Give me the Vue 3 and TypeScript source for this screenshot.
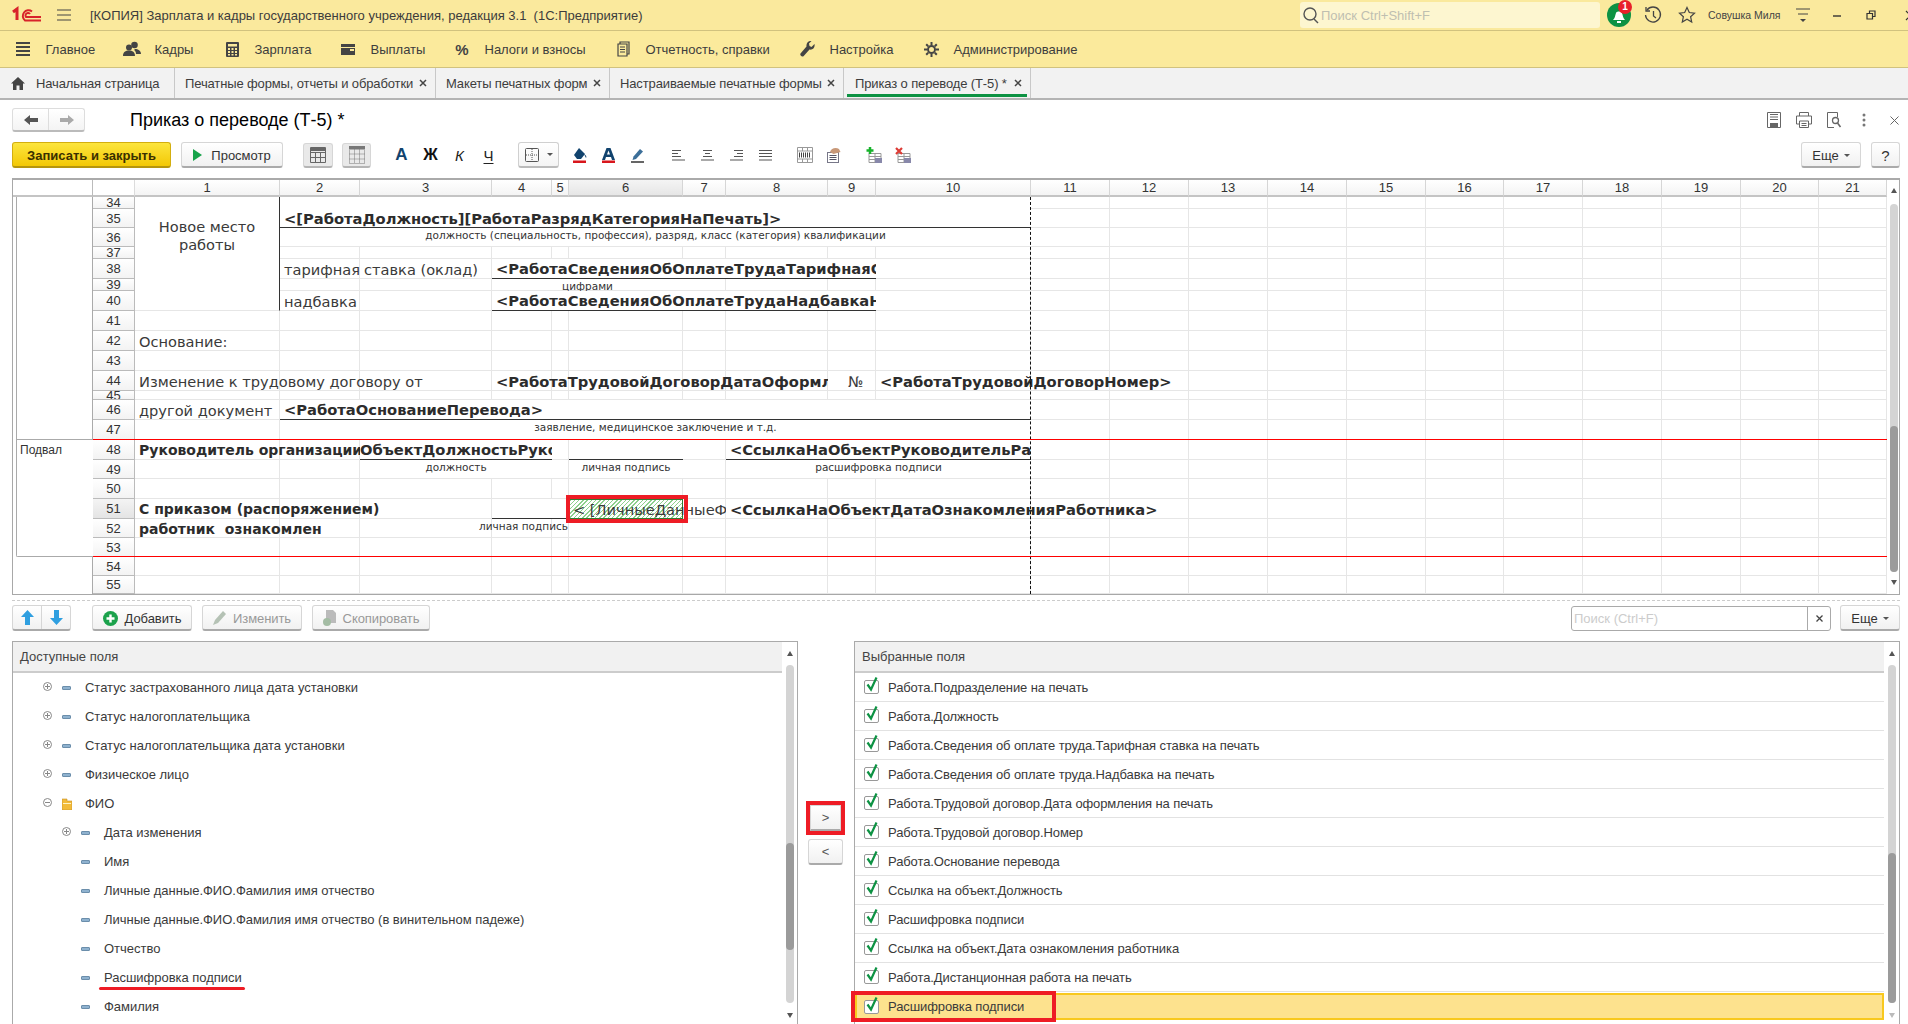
<script setup lang="ts">
interface Item { r1: number; r2: number; c1: number; c2: number; t?: string; cls: string }

const menu = [
  { t: 'Главное', w: 109, i: 'burger' },
  { t: 'Кадры', w: 100, i: 'people' },
  { t: 'Зарплата', w: 116, i: 'calc' },
  { t: 'Выплаты', w: 114, i: 'wallet' },
  { t: 'Налоги и взносы', w: 161, i: 'pct' },
  { t: 'Отчетность, справки', w: 184, i: 'report' },
  { t: 'Настройка', w: 124, i: 'wrench' },
  { t: 'Администрирование', w: 160, i: 'gear' },
]
const tabs = [
  { t: 'Начальная страница', w: 175, home: true },
  { t: 'Печатные формы, отчеты и обработки', w: 261 },
  { t: 'Макеты печатных форм', w: 174 },
  { t: 'Настраиваемые печатные формы', w: 234 },
  { t: 'Приказ о переводе (Т-5) *', w: 187, active: true },
]
const colW = [145, 80, 132, 60, 17, 114, 43, 102, 48, 155, 79, 79, 79, 79, 79, 78, 79, 79, 79, 78, 68]
const rowH = [12, 19, 19, 12, 20, 12, 20, 20, 20, 20, 20, 9, 20, 20, 20, 19, 20, 20, 19, 19, 19, 18]
const rows = rowH.map((h, i) => ({ n: 34 + i, h, line: i + 2 }))
const cols = colW.map((_, i) => i + 1)

const gridCols = '80px 42px ' + colW.map(w => w + 'px').join(' ')
const gridRows = '17px ' + rowH.map(h => h + 'px').join(' ')

const rowLine = (n: number) => n - 34 + 2
const colLine = (n: number) => n + 2
const items: Item[] = [
  { r1: 34, r2: 40, c1: 1, c2: 1, t: 'Новое место работы', cls: 'merged newplace' },
  { r1: 34, r2: 35, c1: 2, c2: 10, t: '<[РаботаДолжность][РаботаРазрядКатегорияНаПечать]>', cls: 'merged bold field under endal' },
  { r1: 36, r2: 36, c1: 2, c2: 10, t: 'должность (специальность, профессия), разряд, класс (категория) квалификации', cls: 'merged small' },
  { r1: 38, r2: 38, c1: 2, c2: 2, t: 'тарифная', cls: 'text' },
  { r1: 38, r2: 38, c1: 3, c2: 3, t: 'ставка (оклад)', cls: 'text' },
  { r1: 38, r2: 38, c1: 4, c2: 9, t: '<РаботаСведенияОбОплатеТрудаТарифнаяСтавкаНаПечать>', cls: 'merged bold field under' },
  { r1: 39, r2: 39, c1: 4, c2: 6, t: 'цифрами', cls: 'merged small' },
  { r1: 40, r2: 40, c1: 2, c2: 2, t: 'надбавка', cls: 'text' },
  { r1: 40, r2: 40, c1: 4, c2: 9, t: '<РаботаСведенияОбОплатеТрудаНадбавкаНаПечать>', cls: 'merged bold field under' },
  { r1: 42, r2: 42, c1: 1, c2: 1, t: 'Основание:', cls: 'text' },
  { r1: 44, r2: 44, c1: 1, c2: 3, t: 'Изменение к трудовому договору от', cls: 'text' },
  { r1: 44, r2: 44, c1: 4, c2: 8, t: '<РаботаТрудовойДоговорДатаОформленияНаПечать>', cls: 'bold field clip' },
  { r1: 44, r2: 44, c1: 9, c2: 9, t: '№', cls: 'text center' },
  { r1: 44, r2: 44, c1: 10, c2: 12, t: '<РаботаТрудовойДоговорНомер>', cls: 'bold field clip' },
  { r1: 46, r2: 46, c1: 1, c2: 1, t: 'другой документ', cls: 'text' },
  { r1: 46, r2: 46, c1: 2, c2: 10, t: '<РаботаОснованиеПеревода>', cls: 'merged bold field under' },
  { r1: 47, r2: 47, c1: 2, c2: 10, t: 'заявление, медицинское заключение и т.д.', cls: 'merged small' },
  { r1: 48, r2: 48, c1: 1, c2: 2, t: 'Руководитель организации', cls: 'bold clip' },
  { r1: 48, r2: 48, c1: 3, c2: 4, t: 'ОбъектДолжностьРуководителя', cls: 'merged bold field under nopad' },
  { r1: 48, r2: 48, c1: 6, c2: 6, cls: 'merged under' },
  { r1: 48, r2: 48, c1: 8, c2: 10, t: '<СсылкаНаОбъектРуководительРасшифровка>', cls: 'merged bold field under' },
  { r1: 49, r2: 49, c1: 3, c2: 4, t: 'должность', cls: 'merged small' },
  { r1: 49, r2: 49, c1: 6, c2: 6, t: 'личная подпись', cls: 'merged small' },
  { r1: 49, r2: 49, c1: 8, c2: 10, t: 'расшифровка подписи', cls: 'merged small' },
  { r1: 51, r2: 51, c1: 1, c2: 3, t: 'С приказом (распоряжением)', cls: 'bold clip' },
  { r1: 51, r2: 51, c1: 4, c2: 5, cls: 'merged under' },
  { r1: 51, r2: 51, c1: 6, c2: 6, cls: 'hatch' },
  { r1: 51, r2: 51, c1: 6, c2: 7, t: '< [ЛичныеДанныеФИОРасшифровкаПодписи]>', cls: 'text clip' },
  { r1: 51, r2: 51, c1: 8, c2: 13, t: '<СсылкаНаОбъектДатаОзнакомленияРаботника>', cls: 'bold field clip' },
  { r1: 52, r2: 52, c1: 1, c2: 3, t: 'работник  ознакомлен', cls: 'bold clip pre' },
  { r1: 52, r2: 52, c1: 4, c2: 5, t: 'личная подпись', cls: 'merged small shifted' },
  { r1: 51, r2: 51, c1: 6, c2: 6, cls: 'redbox' },
]
const itemStyle = (it: Item) => ({
  gridArea: `${rowLine(it.r1)} / ${colLine(it.c1)} / ${rowLine(it.r2) + 1} / ${colLine(it.c2) + 1}`,
})
const cellStyle = (line: number, col: number) => ({ gridRow: line, gridColumn: col })

const aligns = ['l', 'c', 'r', 'j']

const tree = [
  { lvl: 0, t: 'Статус застрахованного лица дата установки', tog: '+' },
  { lvl: 0, t: 'Статус налогоплательщика', tog: '+' },
  { lvl: 0, t: 'Статус налогоплательщика дата установки', tog: '+' },
  { lvl: 0, t: 'Физическое лицо', tog: '+' },
  { lvl: 0, t: 'ФИО', tog: '-', folder: true },
  { lvl: 1, t: 'Дата изменения', tog: '+' },
  { lvl: 1, t: 'Имя', tog: '' },
  { lvl: 1, t: 'Личные данные.ФИО.Фамилия имя отчество', tog: '' },
  { lvl: 1, t: 'Личные данные.ФИО.Фамилия имя отчество (в винительном падеже)', tog: '' },
  { lvl: 1, t: 'Отчество', tog: '' },
  { lvl: 1, t: 'Расшифровка подписи', tog: '', mark: true },
  { lvl: 1, t: 'Фамилия', tog: '' },
]
const picked = [
  'Работа.Подразделение на печать',
  'Работа.Должность',
  'Работа.Сведения об оплате труда.Тарифная ставка на печать',
  'Работа.Сведения об оплате труда.Надбавка на печать',
  'Работа.Трудовой договор.Дата оформления на печать',
  'Работа.Трудовой договор.Номер',
  'Работа.Основание перевода',
  'Ссылка на объект.Должность',
  'Расшифровка подписи',
  'Ссылка на объект.Дата ознакомления работника',
  'Работа.Дистанционная работа на печать',
  'Расшифровка подписи',
]
</script>

<template>
  <div class="app">
    <header class="titlebar">
      <svg class="logo" width="30" height="18" viewBox="0 0 30 18" fill="none" stroke="#d8232a">
        <path d="M1 6 L5 3 V14" stroke-width="3" />
        <path d="M20 5.500 A5.500 5.500 0 1 0 13 14.500 H29" stroke-width="2" />
        <path d="M18 8 A2.500 2.500 0 1 0 14 11 H29" stroke-width="2" />
      </svg>
      <svg class="burger" width="16" height="14" viewBox="0 0 16 14" stroke="#444"><path d="M1 2H15M1 7H15M1 12H15" stroke-width="1" /></svg>
      <span class="apptitle">[КОПИЯ] Зарплата и кадры государственного учреждения, редакция 3.1&nbsp; (1С:Предприятие)</span>
      <div class="globalsearch">
        <svg width="17" height="18" viewBox="0 0 17 18" fill="none" stroke="#555" stroke-width="1.4"><circle cx="8" cy="8" r="6" /><path d="M12 13l4 4" /></svg>
        <span>Поиск Ctrl+Shift+F</span>
      </div>
      <div class="bell">
        <svg width="26" height="26" viewBox="0 0 26 26"><circle cx="13" cy="13" r="12" fill="#0d9243" /><path d="M7 18c2-2 2-4 3-7 .6-2 5-2 6 0 1 3 1 5 3 7z" fill="#fff" /><rect x="11" y="19" width="4" height="2" fill="#fff" /></svg>
        <span class="badge">1</span>
      </div>
      <svg class="tic hist" width="20" height="20" viewBox="0 0 20 20" fill="none" stroke="#444" stroke-width="1.3"><path d="M4 5a7.500 7.500 0 1 1-1.500 5" /><path d="M3 2v4h4" /><path d="M10.500 6v5l2.500 2" /></svg>
      <svg class="tic star" width="18" height="18" viewBox="0 0 18 18" fill="none" stroke="#444" stroke-width="1.2"><path d="M9 1.500l2.300 5 5.200.6-3.900 3.600 1.100 5.300L9 13.300 4.300 16l1.100-5.300L1.500 7.100l5.200-.6z" /></svg>
      <span class="uname">Совушка Миля</span>
      <svg class="tic drop" width="16" height="16" viewBox="0 0 16 16" stroke="#444"><path d="M1 2H15M3 7H13" /><path d="M5 12h6l-3 3z" fill="#444" stroke="none" /></svg>
      <svg class="tic min" width="10" height="4" viewBox="0 0 10 4" stroke="#333" stroke-width="1.4"><path d="M1 3H9" /></svg>
      <svg class="tic max" width="10" height="10" viewBox="0 0 10 10" fill="none" stroke="#333" stroke-width="1.2"><path d="M1 3.500h5.500V9H1zM3.500 3.500V1H9v5.500H6.500" /></svg>
      <svg class="tic cls" width="11" height="11" viewBox="0 0 11 11" stroke="#333" stroke-width="1.2"><path d="M1 1l9 9M10 1l-9 9" /></svg>
    </header>

    <nav class="menubar">
      <div v-for="m in menu" :key="m.t" class="mitem" :style="{ width: m.w + 'px' }">
        <span class="micon">
          <svg v-if="m.i === 'burger'" width="16" height="16" viewBox="0 0 16 16" fill="#444"><path d="M1 1h14v2H1zM1 5h14v2H1zM1 9h14v2H1zM1 13h14v2H1z" /></svg>
          <svg v-else-if="m.i === 'people'" width="18" height="16" viewBox="0 0 18 16" fill="#444"><circle cx="11.500" cy="4" r="3.300" /><circle cx="6" cy="6.500" r="3" /><path d="M0 15c0-4 2.500-5.500 6-5.500s6 1.500 6 5.500zM12 8c3 0 6 1.500 6 5h-5c0-2-1-3.500-2-4z" /></svg>
          <svg v-else-if="m.i === 'calc'" width="13" height="15" viewBox="0 0 13 15"><rect width="13" height="15" rx="1" fill="#444" /><rect x="2" y="2" width="9" height="2.500" fill="#fbea9c" /><path d="M2 6h2v2H2zM5.500 6h2v2h-2zM9 6h2v2H9zM2 9h2v2H2zM5.500 9h2v2h-2zM9 9h2v2H9zM2 12h2v1.500H2zM5.500 12h2v1.500h-2zM9 12h2v1.500H9z" fill="#fbea9c" /></svg>
          <svg v-else-if="m.i === 'wallet'" width="14" height="13" viewBox="0 0 14 13" fill="#444"><path d="M0 1h14v3H0zM0 5h14v7H0z" /><rect x="9" y="6" width="4" height="2" fill="#fbea9c" /></svg>
          <span v-else-if="m.i === 'pct'" class="pct">%</span>
          <svg v-else-if="m.i === 'report'" width="13" height="16" viewBox="0 0 13 16" fill="none" stroke="#444" stroke-width="1.2"><path d="M1 3h9v12H1zM3 3V1h9v12h-2M3 6h5M3 8.500h5M3 11h5" /></svg>
          <svg v-else-if="m.i === 'wrench'" width="15" height="16" viewBox="0 0 15 16" fill="#444"><path d="M14.500 3l-3 3-2-1-.5-2.500L11.500 0C8.500-.5 6 2 6.500 5.500L.5 12.500c-1 1.500 1.200 4 3 2.700l6-6.700c3 .8 5.800-2 5-5.500z" /></svg>
          <svg v-else width="15" height="15" viewBox="0 0 15 15" fill="none" stroke="#444" stroke-width="2"><circle cx="7.500" cy="7.500" r="3.500" /><path d="M7.500 0v3M7.500 12v3M0 7.500h3M12 7.500h3M2.200 2.200l2 2M10.800 10.800l2 2M12.800 2.200l-2 2M4.200 10.800l-2 2" /></svg>
        </span>
        <span>{{ m.t }}</span>
      </div>
    </nav>

    <div class="tabs">
      <div v-for="tab in tabs" :key="tab.t" class="tab" :class="{ active: tab.active, first: tab.home }" :style="{ width: tab.w + 'px' }">
        <svg v-if="tab.home" class="home" width="14" height="13" viewBox="0 0 14 13" fill="#444"><path d="M7 0l7 6.500h-2V13H8.500V8.500h-3V13H2V6.500H0z" /></svg>
        <span class="tabtext">{{ tab.t }}</span>
        <svg v-if="!tab.home" class="tabx" width="8" height="8" viewBox="0 0 8 8" stroke="#444" stroke-width="1.5"><path d="M1 1l6 6M7 1L1 7" /></svg>
      </div>
    </div>

    <main class="form">
      <div class="formhead">
        <div class="navbtns">
          <span class="navb"><svg width="14" height="12" viewBox="0 0 14 12" fill="#555"><path d="M0 6l6-5v3h8v4H6v3z" /></svg></span>
          <span class="navb"><svg width="14" height="12" viewBox="0 0 14 12" fill="#aaa"><path d="M14 6L8 1v3H0v4h8v3z" /></svg></span>
        </div>
        <h1 class="formtitle">Приказ о переводе (Т-5) *</h1>
        <div class="headicons">
          <span class="hi"><svg width="14" height="16" viewBox="0 0 14 16" fill="none" stroke="#666"><path d="M.5.5h13v15H.5zM3 2.500h8M3 5h8M3 7.500h8" /><rect x="3" y="11" width="8" height="4.500" fill="#666" stroke="none" /></svg></span>
          <span class="hi"><svg width="16" height="16" viewBox="0 0 16 16" fill="none" stroke="#666"><path d="M3.500 4V.5h9V4M3.500 12H.5V4h15v8h-3M3.500 9h9v6.500h-9zM5.500 11.500h5M5.500 13.500h5" /></svg></span>
          <span class="hi"><svg width="15" height="16" viewBox="0 0 15 16" fill="none" stroke="#666"><path d="M7 15.500H.5V.5h10V5" /><circle cx="8.500" cy="8.500" r="3" stroke-width="1.300" /><path d="M10.500 11l3 4" stroke-width="1.500" /></svg></span>
          <span class="hi"><svg width="4" height="14" viewBox="0 0 4 14" fill="#777"><circle cx="2" cy="2" r="1.500" /><circle cx="2" cy="7" r="1.500" /><circle cx="2" cy="12" r="1.500" /></svg></span>
          <span class="hi"><svg width="9" height="9" viewBox="0 0 9 9" stroke="#666"><path d="M.5.5l8 8M8.500.5l-8 8" /></svg></span>
        </div>
      </div>

      <div class="toolbar">
        <button class="btn primary">Записать и закрыть</button>
        <button class="btn preview"><svg width="9" height="12" viewBox="0 0 9 12" fill="#17a34a"><path d="M0 0l9 6-9 6z" /></svg>Просмотр</button>
        <span class="tog t1"><svg width="16" height="16" viewBox="0 0 16 16" fill="none" stroke="#666"><path d="M.5.5h15v15H.5zM.5 5.500h15M.5 10.500h15M5.500 5.500v10M10.500 5.500v10" /><path d="M.5 2.500h15" stroke-width="3" /></svg></span>
        <span class="tog t2"><svg width="16" height="18" viewBox="0 0 16 18" fill="none" stroke="#777" stroke-dasharray="1 1"><path d="M.5 3.500h15v14H.5zM.5 8h15M.5 13h15M5.500 3.500v14M10.500 3.500v14" /><path d="M0 1.500h16" stroke-width="3" stroke-dasharray="none" /></svg></span>
        <div class="fmt">
          <span class="ib fa ablue">А</span><span class="ib fa ablack">Ж</span><span class="ib fa aital">К</span><span class="ib fa aund">Ч</span>
        </div>
        <span class="bordersel">
          <svg width="14" height="14" viewBox="0 0 14 14" fill="none" stroke="#555"><rect x=".5" y=".5" width="13" height="13" rx="1" /><path d="M7 1v12M1 7h12" stroke-dasharray="1 1" /></svg>
          <i class="caret"></i>
        </span>
        <div class="iconset s3">
          <span class="ib"><svg width="14" height="15" viewBox="0 0 14 15"><path d="M6 0l6 6-4 5H4L1 7z" fill="#11436e" /><path d="M11 6c2 1 3 3 2 4z" fill="#11436e" /><rect y="12.500" width="13" height="2.500" fill="#d8161c" /></svg></span>
          <span class="ib"><svg width="13" height="15" viewBox="0 0 13 15"><path d="M4.500 0h4L13 12h-3l-1-3H4l-1 3H0zM5 6.500h3L6.500 2.500z" fill="#11436e" fill-rule="evenodd" /><rect y="12.500" width="13" height="2.500" fill="#d8161c" /></svg></span>
          <span class="ib"><svg width="13" height="15" viewBox="0 0 13 15"><path d="M9 1l3 2.500L5 11 1.500 12l1-3.500z" fill="#3c6f99" /><rect y="13" width="13" height="2" fill="#666" /></svg></span>
        </div>
        <div class="iconset s4">
          <span v-for="a in aligns" :key="a" class="ib">
            <svg width="13" height="11" viewBox="0 0 13 11" stroke="#555">
              <path v-if="a === 'l'" d="M0 .5h9M0 3.500h6M0 6.500h9M0 10h13" />
              <path v-else-if="a === 'c'" d="M2 .5h9M4 3.500h5M2 6.500h9M0 10h13" />
              <path v-else-if="a === 'r'" d="M4 .5h9M7 3.500h6M4 6.500h9M0 10h13" />
              <path v-else d="M0 .5h13M0 3.500h13M0 6.500h13M0 10h13" />
            </svg>
          </span>
        </div>
        <div class="iconset s5">
          <span class="ib"><svg width="16" height="16" viewBox="0 0 16 16" fill="none" stroke="#999"><path d="M.5.5h15v15H.5zM.5 4h15M.5 12h15M5.500.5v3.500M10.500.5v3.500M5.500 12v3.500M10.500 12v3.500" /><path d="M2 8h12" stroke="#444" stroke-width="5" stroke-dasharray="1 1" /></svg></span>
          <span class="ib"><svg width="16" height="16" viewBox="0 0 16 16"><rect x="1.500" y="5.500" width="11" height="10" fill="#fff" stroke="#778" /><path d="M3.500 8.500h7M3.500 10.500h7M3.500 12.500h7" stroke="#556" /><path d="M4 5c1-4 6-5 9-3l1.500 3-7 2z" fill="#c89878" /></svg></span>
        </div>
        <div class="iconset s6">
          <span class="ib"><svg width="16" height="16" viewBox="0 0 16 16" fill="none"><path d="M3 6.500h12v9H3zM3 9.500h12M3 12.500h12M9 6.500v9" stroke="#999" /><rect x="9" y="11" width="7" height="5" fill="#88a" /><path d="M4 0v7M.5 3.500h7" stroke="#17b32b" stroke-width="2.500" /></svg></span>
          <span class="ib"><svg width="16" height="16" viewBox="0 0 16 16" fill="none"><path d="M3 6.500h12v9H3zM3 9.500h12M3 12.500h12M9 6.500v9" stroke="#999" /><rect x="9" y="11" width="7" height="5" fill="#88a" /><path d="M1 1l6 6M7 1L1 7" stroke="#dc3b35" stroke-width="2.200" /></svg></span>
        </div>
        <div class="tbright">
          <button class="btn more">Еще<i class="caret"></i></button>
          <button class="btn help">?</button>
        </div>
      </div>

      <section class="sheet">
        <div class="sheetgrid" :style="{ gridTemplateColumns: gridCols, gridTemplateRows: gridRows }">
          <div class="corner corner1"></div>
          <div class="corner"></div>
          <div v-for="c in cols" :key="'h' + c" class="colhead" :class="{ cur: c === 6 }">{{ c }}</div>
          <template v-for="r in rows" :key="r.n">
            <div class="sect" :style="cellStyle(r.line, 1)"></div>
            <div class="rowhead" :class="{ cur: r.n === 51 }" :style="cellStyle(r.line, 2)"><span>{{ r.n }}</span></div>
            <div v-for="c in cols" :key="c" class="cell" :style="cellStyle(r.line, c + 2)"></div>
          </template>
          <div class="sectline"></div>
          <div class="podval">Подвал</div>
          <div class="redline rl1"></div>
          <div class="redline rl2"></div>
          <div v-for="(it, i) in items" :key="i" :class="['gi', it.cls]" :style="itemStyle(it)"><span v-if="it.t">{{ it.t }}</span></div>
          <div class="dashv"></div>
        </div>
        <div class="vscroll sv">
          <i class="tri up"></i>
          <div class="track"><div class="thumb"></div></div>
          <i class="tri down"></i>
        </div>
      </section>

      <div class="dashrow"></div>

      <div class="cmdbar">
        <div class="updown">
          <span><svg width="13" height="15" viewBox="0 0 13 15" fill="#2f9fe0"><path d="M6.500 0L13 7H9v8H4V7H0z" /></svg></span>
          <span><svg width="13" height="15" viewBox="0 0 13 15" fill="#2f9fe0"><path d="M6.500 15L13 8H9V0H4v8H0z" /></svg></span>
        </div>
        <button class="btn cmd add"><svg width="15" height="15" viewBox="0 0 15 15"><circle cx="7.500" cy="7.500" r="7.500" fill="#1ca24c" /><path d="M7.500 3.500v8M3.500 7.500h8" stroke="#fff" stroke-width="2.400" /></svg>Добавить</button>
        <button class="btn cmd off edit"><svg width="13" height="14" viewBox="0 0 13 14" fill="#b5c2b5"><path d="M10 0l3 3-8 9-5 2 2-5z" /></svg>Изменить</button>
        <button class="btn cmd off copy"><svg width="13" height="16" viewBox="0 0 13 16"><path d="M3 0h7l3 3v10H3z" fill="#bbb" /><circle cx="4" cy="12" r="4" fill="#a4bca4" /></svg>Скопировать</button>
        <div class="findbox">
          <span class="ph">Поиск (Ctrl+F)</span>
          <span class="fx"><svg width="7" height="7" viewBox="0 0 7 7" stroke="#444" stroke-width="1.300"><path d="M.5.500l6 6M6.500.500l-6 6" /></svg></span>
        </div>
        <button class="btn more2">Еще<i class="caret"></i></button>
      </div>

      <div class="lists">
        <section class="panel left">
          <div class="pmain">
            <div class="phead">Доступные поля</div>
            <div v-for="n in tree" :key="n.t" class="trow" :class="'lvl' + n.lvl">
              <span class="tog2" :class="{ hid: !n.tog }">
                <svg width="9" height="9" viewBox="0 0 9 9" fill="none" stroke="#888"><circle cx="4.500" cy="4.500" r="4" /><path d="M2 4.500h5" /><path v-if="n.tog === '+'" d="M4.500 2v5" /></svg>
              </span>
              <svg v-if="n.folder" class="kind folder" width="10" height="12" viewBox="0 0 10 12"><path d="M0 1h5v2h5v9H0z" fill="#f2bb3a" stroke="#c8902a" stroke-width=".6" /><path d="M1 5h8v1H1z" fill="#fff3c2" /></svg>
              <span v-else class="kind dash"></span>
              <span class="ttext" :class="{ mark: n.mark }">{{ n.t }}</span>
            </div>
          </div>
          <div class="vscroll pv1">
            <i class="tri up"></i>
            <div class="track"><div class="thumb"></div></div>
            <i class="tri down"></i>
          </div>
        </section>

        <div class="movers">
          <button class="mv first">&gt;</button>
          <button class="mv">&lt;</button>
        </div>

        <section class="panel right">
          <div class="pmain">
            <div class="phead">Выбранные поля</div>
            <div v-for="(p, i) in picked" :key="i" class="prow" :class="{ sel: i === picked.length - 1 }">
              <span class="cb"><svg width="12" height="17" viewBox="0 0 12 17" fill="none" stroke="#0d9243" stroke-width="2.200"><path d="M1.500 8.500l3.500 5L10.500 1.500" /></svg></span>
              <span>{{ p }}</span>
              <i v-if="i === picked.length - 1" class="selred"></i>
            </div>
          </div>
          <div class="vscroll pv2">
            <i class="tri up"></i>
            <div class="track"><div class="thumb"></div></div>
            <i class="tri down lite"></i>
          </div>
        </section>
      </div>
    </main>
  </div>
</template>

<style scoped>
.app { width: 1908px; height: 1024px; overflow: hidden; display: flex; flex-direction: column; background: #fff; font: 13px "Liberation Sans", Arial, sans-serif; color: #333; }
.titlebar { height: 30px; flex: none; display: flex; align-items: center; background: #fae99d; border-bottom: 1px solid #d1c27e; position: relative; box-sizing: content-box; }
.logo { margin-left: 12px; flex: none; }
.burger { margin-left: 14px; flex: none; }
.apptitle { margin-left: 18px; width: 1210px; flex: none; white-space: nowrap; color: #3c3c3c; font-size: 13px; }
.globalsearch { width: 300px; height: 26px; flex: none; margin-left: 0; background: #fdf6d0; border-radius: 3px; display: flex; align-items: center; color: #bfbfb0; font-size: 13px; padding-left: 2px; box-sizing: border-box; }
.globalsearch span { margin-left: 2px; }
.bell { position: relative; width: 26px; height: 26px; margin-left: 6px; flex: none; }
.badge { position: absolute; top: -2px; left: 12px; width: 14px; height: 14px; border-radius: 50%; background: #e8202a; color: #fff; font: bold 10px/14px "Liberation Sans", sans-serif; text-align: center; }
.tic { flex: none; }
.hist { margin-left: 11px; }
.star { margin-left: 15px; }
.uname { margin-left: 12px; width: 82px; flex: none; font-size: 10.500px; white-space: nowrap; color: #444; }
.drop { margin-left: 5px; }
.min { margin-left: 21px; }
.max { margin-left: 24px; }
.cls { margin-left: 29px; }

.menubar { height: 36px; flex: none; display: flex; align-items: center; padding-left: 12px; background: #fbea9c; border-bottom: 1px solid #d1c27e; box-sizing: content-box; color: #3d3d3d; }
.mitem { display: flex; align-items: center; flex: none; white-space: nowrap; }
.micon { width: 22px; margin-right: 11.500px; display: flex; justify-content: center; flex: none; }
.pct { font: bold 15px "Liberation Sans", sans-serif; color: #444; }

.tabs { height: 30px; flex: none; display: flex; background: #f2f2f2; border-bottom: 2px solid #b4b4b4; box-sizing: content-box; }
.tab { display: flex; align-items: center; flex: none; box-sizing: border-box; border-right: 1px solid #c8c8c8; padding: 0 8px 0 10px; position: relative; color: #3d3d3d; white-space: nowrap; letter-spacing: -.13px; }
.tab.first { padding-left: 11px; }
.home { margin-right: 11px; }
.tabtext { flex: 1; }
.tab.active::after { content: ""; position: absolute; left: 3px; right: 3px; bottom: 1px; height: 3px; background: #0d9243; }
.tab.active { padding-left: 11px; }

.form { flex: 1; min-height: 0; display: flex; flex-direction: column; }
.formhead { height: 24px; margin-top: 8px; flex: none; display: flex; align-items: center; padding: 0 0 0 12px; }
.navbtns { width: 73px; height: 24px; box-sizing: border-box; display: flex; border: 1px solid #ddd; border-bottom: 2px solid #bbb; border-radius: 3px; background: linear-gradient(#fff, #f4f4f4); flex: none; }
.navb { flex: 1; display: flex; align-items: center; justify-content: center; }
.navb:first-child { border-right: 1px solid #ddd; }
.formtitle { margin: 0 0 0 45px; font: 18px "Liberation Sans", sans-serif; color: #000; white-space: nowrap; }
.headicons { margin-left: auto; margin-right: -1px; display: flex; align-items: center; }
.hi { width: 30px; display: flex; justify-content: center; flex: none; }

.toolbar { height: 26px; margin-top: 10px; flex: none; display: flex; align-items: center; padding: 0 8px 0 12px; }
.btn { box-sizing: border-box; height: 26px; flex: none; font: 13px "Liberation Sans", sans-serif; color: #333; border: 1px solid #d6d6d6; border-bottom: 2px solid #aaa; border-radius: 3px; background: linear-gradient(#fff, #f1f1f1); padding: 1px 0 0; display: flex; align-items: center; justify-content: center; }
.primary { width: 159px; background: linear-gradient(#fce53d, #f3c806); border-color: #d3ae0f; border-bottom-color: #b5950e; color: #3a3000; font-weight: bold; }
.preview { width: 102px; margin-left: 10px; gap: 9px; }
.tog { width: 30px; height: 25px; box-sizing: border-box; flex: none; display: flex; align-items: center; justify-content: center; background: #e9e9e9; border: 1px solid #d6d6d6; border-bottom: 2px solid #b5b5b5; border-radius: 3px; }
.t1 { margin-left: 20px; }
.t2 { margin-left: 9px; width: 29px; }
.fmt { display: flex; margin-left: 16px; flex: none; }
.ib { width: 29px; height: 26px; flex: none; display: flex; align-items: center; justify-content: center; }
.fa { font: bold 15px "Liberation Sans", sans-serif; }
.ablue { color: #11436e; font-size: 17px; }
.ablack { color: #111; font-size: 16px; }
.aital { color: #222; font-weight: normal; font-style: italic; font-size: 15px; }
.aund { color: #222; font-weight: normal; text-decoration: underline; text-underline-offset: 2px; }
.bordersel { width: 41px; height: 26px; margin-left: 15px; box-sizing: border-box; flex: none; display: flex; align-items: center; justify-content: center; gap: 8px; border: 1px solid #d0d0d0; border-bottom: 2px solid #bbb; border-radius: 3px; background: linear-gradient(#fff, #f4f4f4); }
.caret { display: inline-block; width: 0; height: 0; border: 3px solid transparent; border-top: 3px solid #555; border-bottom: 0; margin-left: 5px; }
.bordersel .caret { margin-left: 0; }
.iconset { display: flex; flex: none; }
.s3 { margin-left: 6px; }
.s4 { margin-left: 12px; }
.s5 { margin-left: 10px; }
.s6 { margin-left: 11px; }
.tbright { margin-left: auto; display: flex; gap: 10px; }
.more { width: 60px; }
.help { width: 29px; font-size: 15px; }

.sheet { height: 417px; margin: 10px 8px 0 12px; flex: none; display: flex; box-sizing: border-box; border: 1px solid #a8a8a8; border-top: 2px solid #aaa; }
.sheetgrid { display: grid; flex: none; position: relative; }
.corner { border-right: 1px solid #dcdcdc; border-bottom: 2px solid #c4c4c4; box-sizing: border-box; background: #fff; }
.corner1 { border-right-color: #bbb; }
.colhead { display: flex; align-items: center; justify-content: center; box-sizing: border-box; border-right: 1px solid #d6d6d6; border-bottom: 2px solid #c4c4c4; background: linear-gradient(#fff, #f4f4f4); font-size: 13px; color: #333; overflow: hidden; }
.colhead.cur { background: linear-gradient(#f4f4f4, #e6e6e6); }
.sect { background: #fff; border-right: 1px solid #aaa; box-sizing: border-box; }
.rowhead { box-sizing: border-box; border-right: 1px solid #bbb; border-bottom: 1px solid #bbb; background: linear-gradient(#fff, #f3f3f3); font-size: 13px; color: #333; overflow: hidden; display: flex; align-items: center; justify-content: center; }
.rowhead.cur { background: linear-gradient(#f4f4f4, #e4e4e4); }
.cell { box-sizing: border-box; border-right: 1px solid #e6e6e6; border-bottom: 1px solid #e6e6e6; }
.sectline { grid-area: 2 / 1 / 16 / 2; margin-left: 3px; border-left: 1px solid #aaa; z-index: 1; }
.podval { grid-area: 16 / 1 / 22 / 2; margin-left: 3px; border: 1px solid #aaa; border-right: 0; padding: 3px 0 0 3px; font-size: 12px; color: #333; background: #fff; z-index: 1; border-radius: 0 0 0 2px; margin-top: -1px; }
.redline { height: 1px; background: #f00; grid-column: 2 / -1; z-index: 4; }
.rl1 { grid-row: 16; align-self: start; margin-top: -1px; }
.rl2 { grid-row: 21; align-self: end; }
.gi { box-sizing: border-box; font: 14.600px "DejaVu Sans", Verdana, sans-serif; color: #333; white-space: nowrap; display: flex; align-items: center; padding-left: 4px; min-width: 0; z-index: 2; }
.text { color: #3a3a3a; }
.center { justify-content: center; padding: 0 0 0 7px; }
.clip { overflow: hidden; }
.bold { font-size: 14px; font-weight: bold; color: #2c2c2c; }
.field { font-size: 14.700px; }
.merged { background: #fff; overflow: hidden; border-bottom: 1px solid #e6e6e6; }
.under { border-bottom: 1px solid #333; }
.endal { align-items: flex-end; }
.nopad { padding-left: 0; }
.small { font-size: 10.500px; line-height: 15px; align-items: flex-start; justify-content: center; padding: 0; color: #333; background: #fff; overflow: visible; }
.shifted { background: transparent; transform: translateX(-7px); z-index: 3; border-bottom: 0; }
.newplace { border-right: 1px solid #333; white-space: normal; text-align: center; align-items: flex-start; justify-content: center; padding: 21px 8px 0; line-height: 18px; color: #3a3a3a; }
.pre { white-space: pre; }
.hatch { background: repeating-linear-gradient(135deg, #8ed08e 0 1px, #fff 1px 3px); border: 1px solid #2f7d32; z-index: 2; }
.redbox { position: relative; z-index: 5; padding: 0; }
.redbox::after { content: ""; position: absolute; inset: -4px -5px -4px -3px; border: 4px solid #ee1c25; }
.dashv { grid-area: 2 / 12 / -1 / 13; border-right: 1px dashed #111; width: 0; z-index: 3; justify-self: end; }

.vscroll { position: relative; width: 15px; flex: none; display: flex; flex-direction: column; align-items: center; }
.tri { display: block; width: 0; height: 0; border: 3px solid transparent; flex: none; }
.tri.up { border-bottom: 5px solid #555; border-top: 0; }
.tri.down { border-top: 5px solid #555; border-bottom: 0; }
.tri.lite { border-top-color: #bbb; }
.track { flex: 1; width: 8px; background: #d4d4d4; border-radius: 4px; position: relative; }
.thumb { position: absolute; left: 0; right: 0; background: #9b9b9b; border-radius: 4px; }
.sv { width: 13px; padding: 8px 0 9px; box-sizing: border-box; height: 100%; }
.sv .track { margin: 11px 0 8px; }
.sv .thumb { top: 222px; bottom: 0; }

.dashrow { height: 0; margin: 5px 8px 0 12px; border-top: 1px dashed #ccc; flex: none; }
.cmdbar { height: 26px; margin-top: 4px; padding: 0 8px 0 12px; display: flex; align-items: center; flex: none; }
.updown { width: 59px; height: 26px; box-sizing: border-box; display: flex; border: 1px solid #d6d6d6; border-bottom: 2px solid #aaa; border-radius: 3px; background: linear-gradient(#fff, #f1f1f1); flex: none; }
.updown span { flex: 1; display: flex; align-items: center; justify-content: center; }
.updown span:first-child { border-right: 1px solid #d6d6d6; }
.cmd { gap: 7px; font-size: 13px; letter-spacing: -.08px; }
.add { width: 100px; margin-left: 21px; }
.edit { width: 100px; margin-left: 10px; }
.copy { width: 118px; margin-left: 10px; }
.off { color: #999; }
.findbox { margin-left: auto; width: 260px; height: 25px; box-sizing: border-box; border: 1px solid #aaa; border-radius: 3px; display: flex; align-items: center; font-size: 13px; color: #ccc; }
.ph { flex: 1; padding-left: 2px; }
.fx { width: 22px; height: 100%; border-left: 1px solid #aaa; display: flex; align-items: center; justify-content: center; flex: none; }
.more2 { width: 60px; margin-left: 9px; }

.lists { flex: 1; min-height: 0; margin: 10px 8px 0 12px; display: flex; }
.panel { box-sizing: border-box; display: flex; border: 1px solid #aaa; border-bottom: 0; height: 400px; flex: none; }
.left { width: 786px; }
.right { width: 1046px; }
.pmain { flex: 1; min-width: 0; }
.phead { height: 29px; background: #f1f1f1; border-bottom: 2px solid #ccc; box-sizing: content-box; padding-left: 7px; display: flex; align-items: center; font-size: 13px; color: #444; }
.trow { height: 29px; display: flex; align-items: center; color: #3a3a3a; white-space: nowrap; font-size: 13px; letter-spacing: -.02px; }
.lvl0 { padding-left: 30px; }
.lvl1 { padding-left: 49px; }
.tog2 { width: 9px; flex: none; display: flex; margin-top: -3px; }
.tog2.hid { visibility: hidden; }
.kind { margin-left: 10px; flex: none; }
.folder { margin-right: -1px; }
.dash { width: 9px; height: 4px; background: #8fb2cf; border: 1px solid #6b8eab; box-sizing: border-box; border-radius: 1px; }
.ttext { margin-left: 14px; position: relative; }
.mark::after { content: ""; position: absolute; left: -5px; right: -3px; bottom: -5px; height: 3px; border-radius: 2px; background: #ee1c25; }
.vscroll.pv1, .vscroll.pv2 { padding-top: 9px; box-sizing: border-box; height: 100%; }
.pv1 .track, .pv2 .track { flex: none; height: 338px; margin: 9px 0 10px; }
.pv1 .thumb { top: 178px; height: 107px; }
.pv2 .thumb { top: 188px; bottom: 0; }
.movers { width: 56px; flex: none; display: flex; flex-direction: column; padding-left: 10px; box-sizing: border-box; }
.mv { width: 35px; height: 26px; box-sizing: border-box; border: 1px solid #d6d6d6; border-bottom: 2px solid #aaa; border-radius: 3px; background: linear-gradient(#fff, #f1f1f1); font: 13px "Liberation Sans", sans-serif; color: #555; padding: 0; flex: none; margin-top: 8px; }
.mv.first { margin-top: 164px; width: 31px; margin-left: 2px; border-radius: 0; outline: 4px solid #ee1c25; }
.prow { height: 28px; box-sizing: content-box; border-bottom: 1px solid #e2e2e2; display: flex; align-items: center; white-space: nowrap; font-size: 13px; color: #3a3a3a; position: relative; letter-spacing: -.1px; }
.cb { width: 15px; height: 14px; margin-left: 9px; margin-right: 9px; box-sizing: border-box; border: 1px solid #999; border-radius: 2px; background: #fff; position: relative; flex: none; }
.cb svg { position: absolute; left: 1px; top: -5px; }
.sel { background: #fde28e; border: 2px solid #f8c81e; height: 27px; margin-top: 1px; box-sizing: border-box; }
.sel .cb { margin-left: 7px; }
.selred { position: absolute; left: -6px; top: -4px; width: 205px; height: 31px; box-sizing: border-box; border: 4px solid #ee1c25; }
</style>

<style>
html, body { margin: 0; background: #fff; }
</style>
